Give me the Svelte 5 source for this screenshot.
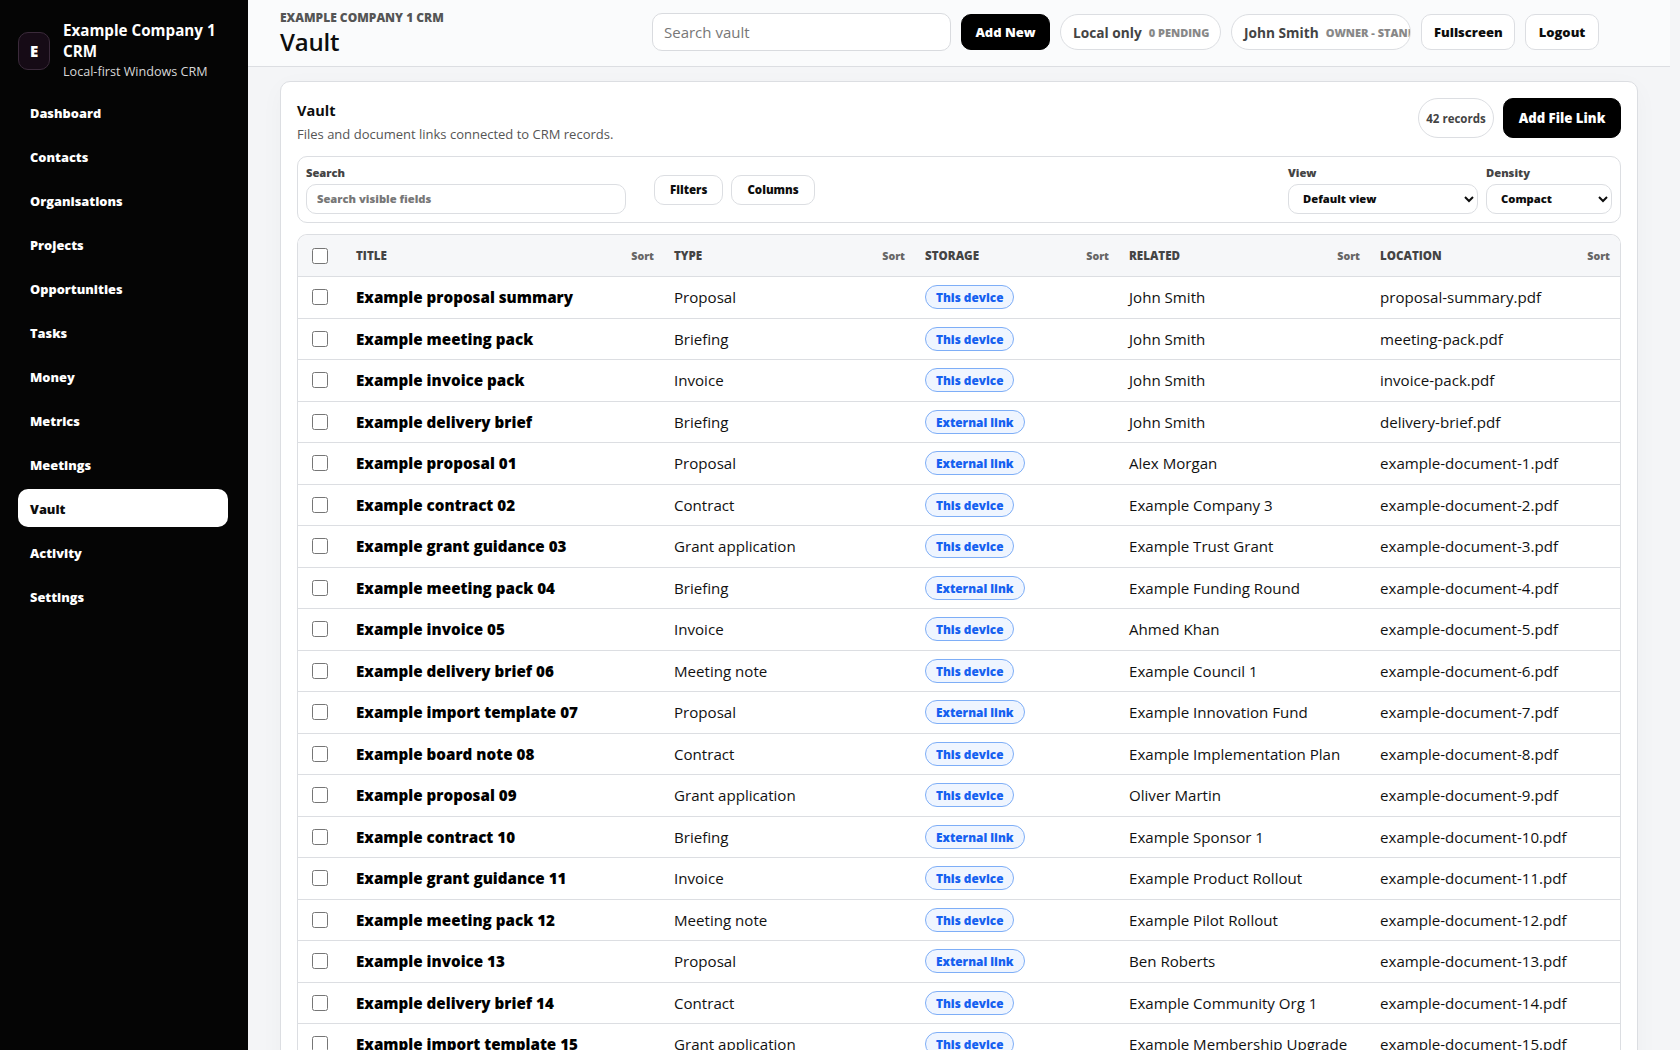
<script lang="ts">
  const nav = ["Dashboard", "Contacts", "Organisations", "Projects", "Opportunities", "Tasks", "Money", "Metrics", "Meetings", "Vault", "Activity", "Settings"];

  const DEV = "This device";
  const EXT = "External link";
  const rows = [
    ["Example proposal summary", "Proposal", DEV, "John Smith", "proposal-summary.pdf"],
    ["Example meeting pack", "Briefing", DEV, "John Smith", "meeting-pack.pdf"],
    ["Example invoice pack", "Invoice", DEV, "John Smith", "invoice-pack.pdf"],
    ["Example delivery brief", "Briefing", EXT, "John Smith", "delivery-brief.pdf"],
    ["Example proposal 01", "Proposal", EXT, "Alex Morgan", "example-document-1.pdf"],
    ["Example contract 02", "Contract", DEV, "Example Company 3", "example-document-2.pdf"],
    ["Example grant guidance 03", "Grant application", DEV, "Example Trust Grant", "example-document-3.pdf"],
    ["Example meeting pack 04", "Briefing", EXT, "Example Funding Round", "example-document-4.pdf"],
    ["Example invoice 05", "Invoice", DEV, "Ahmed Khan", "example-document-5.pdf"],
    ["Example delivery brief 06", "Meeting note", DEV, "Example Council 1", "example-document-6.pdf"],
    ["Example import template 07", "Proposal", EXT, "Example Innovation Fund", "example-document-7.pdf"],
    ["Example board note 08", "Contract", DEV, "Example Implementation Plan", "example-document-8.pdf"],
    ["Example proposal 09", "Grant application", DEV, "Oliver Martin", "example-document-9.pdf"],
    ["Example contract 10", "Briefing", EXT, "Example Sponsor 1", "example-document-10.pdf"],
    ["Example grant guidance 11", "Invoice", DEV, "Example Product Rollout", "example-document-11.pdf"],
    ["Example meeting pack 12", "Meeting note", DEV, "Example Pilot Rollout", "example-document-12.pdf"],
    ["Example invoice 13", "Proposal", EXT, "Ben Roberts", "example-document-13.pdf"],
    ["Example delivery brief 14", "Contract", DEV, "Example Community Org 1", "example-document-14.pdf"],
    ["Example import template 15", "Grant application", DEV, "Example Membership Upgrade", "example-document-15.pdf"]
  ];
  const columns = ["Title", "Type", "Storage", "Related", "Location"];
</script>

<div class="app">
  <aside class="sidebar">
    <div class="brand">
      <div class="logo">E</div>
      <div class="brand-text">
        <div class="brand-name">Example Company 1 CRM</div>
        <div class="brand-sub">Local-first Windows CRM</div>
      </div>
    </div>
    <nav class="nav">
      {#each nav as item}
        <div class="nav-item" class:active={item === "Vault"}>{item}</div>
      {/each}
    </nav>
  </aside>

  <div class="main">
    <header class="topbar">
      <div class="heading">
        <div class="eyebrow">EXAMPLE COMPANY 1 CRM</div>
        <h1>Vault</h1>
      </div>
      <div class="actions">
        <input class="top-search" placeholder="Search vault" />
        <button class="btn primary add-new">Add New</button>
        <div class="pill status"><span>Local only</span><small>0 PENDING</small></div>
        <div class="pill user"><span>John Smith</span><small>OWNER - STANDARD</small></div>
        <button class="btn fullscreen">Fullscreen</button>
        <button class="btn logout">Logout</button>
      </div>
    </header>

    <section class="card">
      <div class="card-head">
        <div>
          <h2>Vault</h2>
          <p>Files and document links connected to CRM records.</p>
        </div>
        <div class="card-actions">
          <div class="count">42 records</div>
          <button class="btn primary add-link">Add File Link</button>
        </div>
      </div>

      <div class="toolbar">
        <label class="field search-field">
          <span>Search</span>
          <input placeholder="Search visible fields" />
        </label>
        <button class="btn small">Filters</button>
        <button class="btn small">Columns</button>
        <label class="field view-field">
          <span>View</span>
          <select><option>Default view</option></select>
        </label>
        <label class="field density-field">
          <span>Density</span>
          <select><option>Compact</option></select>
        </label>
      </div>

      <div class="table-wrap">
        <table>
          <colgroup>
            <col style="width: 48px" />
            <col style="width: 318px" />
            <col style="width: 251px" />
            <col style="width: 204px" />
            <col style="width: 251px" />
            <col />
          </colgroup>
          <thead>
            <tr>
              <th class="check"><input type="checkbox" /></th>
              {#each columns as col}
                <th><div class="th-inner"><span>{col}</span><small>Sort</small></div></th>
              {/each}
            </tr>
          </thead>
          <tbody>
            {#each rows as row}
              <tr>
                <td class="check"><input type="checkbox" /></td>
                <td class="title">{row[0]}</td>
                <td>{row[1]}</td>
                <td><span class="badge">{row[2]}</span></td>
                <td>{row[3]}</td>
                <td>{row[4]}</td>
              </tr>
            {/each}
          </tbody>
        </table>
      </div>
    </section>
  </div>
</div>

<style>
  :global(body) {
    margin: 0;
    background: #f4f5f7;
    overflow: hidden;
    font-family: "Open Sans", "Noto Sans", sans-serif;
    color: #0d0d0d;
  }
  .app {
    display: flex;
    height: 100vh;
    overflow: hidden;
  }
  .sidebar {
    flex: 0 0 248px;
    box-sizing: border-box;
    background: #050505;
    color: #fff;
    padding: 20px 20px 0 18px;
  }
  .brand {
    display: flex;
    align-items: center;
    gap: 13px;
  }
  .logo {
    flex: 0 0 32px;
    height: 38px;
    box-sizing: border-box;
    display: flex;
    align-items: center;
    justify-content: center;
    background: #160b16;
    border: 1px solid #3a2a3a;
    border-radius: 10px;
    font-size: 15px;
    font-weight: 800;
  }
  .brand-name {
    font-size: 15.2px;
    font-weight: 700;
    line-height: 21px;
  }
  .brand-sub {
    font-size: 12.6px;
    line-height: 20px;
    color: #d8d8d8;
  }
  .nav {
    display: flex;
    flex-direction: column;
    gap: 6px;
    margin-top: 11px;
  }
  .nav-item {
    box-sizing: border-box;
    height: 38px;
    display: flex;
    align-items: center;
    padding: 2px 12px 0;
    border-radius: 10px;
    font-size: 12.8px;
    font-weight: 800;
  }
  .nav-item.active {
    background: #fff;
    color: #0d0d0d;
  }
  .main {
    flex: 1;
    min-width: 0;
    margin-right: 10px;
  }
  .topbar {
    height: 67px;
    box-sizing: border-box;
    display: flex;
    align-items: center;
    justify-content: space-between;
    padding: 0 71px 3px 32px;
    background: #fafbfc;
    border-bottom: 1px solid #dcdee2;
  }
  .eyebrow {
    font-size: 12px;
    font-weight: 800;
    color: #555;
    line-height: 16px;
    margin-top: 5px;
  }
  h1 {
    margin: 0;
    font-size: 24px;
    font-weight: 600;
    line-height: 32px;
    letter-spacing: -0.2px;
  }
  .actions {
    display: flex;
    align-items: center;
    gap: 10px;
  }
  .top-search {
    box-sizing: border-box;
    width: 299px;
    height: 38px;
    padding: 0 11px;
    border: 1px solid #d9dbdf;
    border-radius: 10px;
    font: 15px "Open Sans", sans-serif;
  }
  input::placeholder {
    color: #777;
  }
  .btn {
    box-sizing: border-box;
    height: 36px;
    padding: 0 12px;
    background: #fff;
    color: #0d0d0d;
    border: 1px solid #dcdee2;
    border-radius: 10px;
    font: 800 13px "Open Sans", sans-serif;
  }
  .btn.primary {
    background: #000;
    border-color: #000;
    color: #fff;
  }
  .add-new { width: 89px; }
  .fullscreen { width: 94px; }
  .logout { width: 74px; }
  .pill {
    box-sizing: border-box;
    height: 36px;
    display: flex;
    align-items: center;
    gap: 7px;
    padding: 1px 12px 0;
    background: #fff;
    border: 1px solid #dcdee2;
    border-radius: 18px;
    overflow: hidden;
    white-space: nowrap;
    font-size: 13.7px;
    font-weight: 700;
    color: #444;
  }
  .pill small {
    font-size: 11px;
    font-weight: 800;
    color: #888;
  }
  .status { width: 161px; }
  .user { width: 180px; padding-right: 0; }
  .card {
    box-sizing: border-box;
    margin: 14px 32px 0;
    padding: 16px 16px 0 16px;
    background: #fff;
    border: 1px solid #dcdee2;
    border-radius: 10px;
    box-shadow: 0 6px 24px rgba(0, 0, 0, 0.03);
  }
  .card-head {
    display: flex;
    justify-content: space-between;
    align-items: flex-start;
    height: 58px;
  }
  h2 {
    margin: 3px 0 0;
    font-size: 14.5px;
    font-weight: 700;
    line-height: 20px;
  }
  .card-head p {
    margin: 4px 0 0;
    font-size: 13px;
    line-height: 18px;
    color: #555;
  }
  .card-actions {
    display: flex;
    align-items: center;
    gap: 9px;
  }
  .count {
    box-sizing: border-box;
    width: 76px;
    height: 40px;
    display: flex;
    align-items: center;
    justify-content: center;
    border: 1px solid #dcdee2;
    border-radius: 20px;
    font-size: 11.5px;
    font-weight: 700;
    color: #444;
    white-space: nowrap;
  }
  .btn.add-link {
    width: 118px;
    height: 40px;
    padding: 0;
    font-size: 13.2px;
  }
  .toolbar {
    box-sizing: border-box;
    height: 67px;
    display: flex;
    align-items: center;
    gap: 8px;
    padding: 0 8px;
    border: 1px solid #dcdee2;
    border-radius: 10px;
  }
  .field {
    display: flex;
    flex-direction: column;
    gap: 3px;
  }
  .field span {
    font-size: 11.2px;
    font-weight: 800;
    line-height: 16px;
    color: #444;
  }
  .field input,
  .field select {
    box-sizing: border-box;
    height: 30px;
    background: #fff;
    color: #0d0d0d;
    border: 1px solid #dcdee2;
    border-radius: 10px;
    font: 800 11.2px "Open Sans", sans-serif;
  }
  .field input {
    padding: 0 10px 2px;
  }
  .field select {
    padding: 0 0 2px 10px;
  }
  .search-field {
    width: 320px;
    margin-right: 20px;
  }
  .btn.small {
    height: 30px;
    padding: 0 15px;
    font-size: 11.5px;
  }
  .view-field {
    width: 190px;
    margin-left: auto;
  }
  .density-field {
    width: 126px;
  }
  .table-wrap {
    margin-top: 11px;
    border: 1px solid #dcdee2;
    border-bottom: 0;
    border-radius: 10px 10px 0 0;
    overflow: hidden;
  }
  table {
    width: 100%;
    table-layout: fixed;
    border-collapse: separate;
    border-spacing: 0;
  }
  th,
  td {
    box-sizing: border-box;
    padding: 0 10px;
    border-bottom: 1px solid #dcdee2;
    text-align: left;
    white-space: nowrap;
    overflow: hidden;
  }
  thead tr {
    height: 42px;
    background: #f6f7f9;
  }
  .th-inner {
    display: flex;
    justify-content: space-between;
    align-items: center;
  }
  .th-inner span {
    font-size: 11.6px;
    font-weight: 800;
    color: #444;
    text-transform: uppercase;
  }
  .th-inner small {
    font-size: 10.6px;
    font-weight: 800;
    color: #666;
  }
  tbody tr {
    height: 41.5px;
  }
  td {
    font-size: 15.1px;
    color: #111;
  }
  td.title {
    font-size: 15.2px;
    font-weight: 800;
    color: #000;
  }
  .check {
    padding: 0 0 0 14px;
  }
  .check input {
    display: block;
    width: 16px;
    height: 16px;
    margin: 0;
  }
  .badge {
    box-sizing: border-box;
    display: inline-flex;
    align-items: center;
    height: 24px;
    padding: 0 10px;
    background: #eff5ff;
    border: 1px solid #7eaef7;
    border-radius: 12px;
    color: #1560f0;
    font-size: 11.8px;
    font-weight: 800;
  }
</style>
